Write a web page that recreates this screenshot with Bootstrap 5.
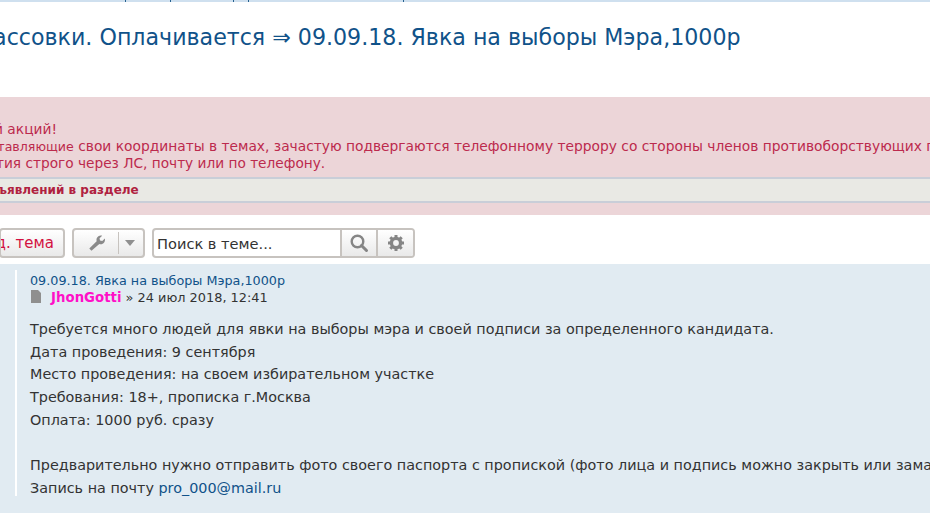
<!DOCTYPE html>
<html lang="ru"><head><meta charset="utf-8">
<link rel="stylesheet" href="https://cdn.jsdelivr.net/npm/bootstrap@5.3.0/dist/css/bootstrap.min.css">
<style>
html,body{height:516px;overflow:hidden;background:#fff}
body{font-family:"DejaVu Sans",Verdana,sans-serif;color:#333;width:930px}
.topline{height:2px;background-color:#cfe0ef;background-image:linear-gradient(#27618f,#27618f),linear-gradient(#27618f,#27618f),linear-gradient(#27618f,#27618f),linear-gradient(#27618f,#27618f),linear-gradient(#27618f,#27618f);background-size:1px 2px;background-repeat:no-repeat;background-position:125px 0,170px 0,233px 0,248px 0,403px 0}
.tt{font-size:22.15px;line-height:28px;color:#105289;margin:21px 0 0 -26px;white-space:nowrap;height:74px}
.warnbox{height:118px;background:#ecd5d8;color:#bc2a4d;font-size:13.8px;line-height:17px;padding-top:24px;white-space:nowrap}
.warnbox p{margin:0}
.warn0{margin-left:-6px!important}
.warn1{margin-left:-27px!important}
.warn1 span{font-size:12.6px}
.warn2{margin-left:-4px!important;font-size:13.7px}
.bar{margin-top:5px;height:26px;background:#e9e9e4;border-top:2px solid #c9ced8;border-bottom:2px solid #c9ced8;font-weight:700;line-height:22px;font-size:12px;color:#b0223f;text-indent:-2px}
.tools{height:49px;padding:13px 0 0 0;gap:7px;align-items:flex-start}
.tbtn{height:30px;border:2px solid #c7c3bf;border-radius:4px;background:linear-gradient(#fff,#e9e9e9);display:flex;align-items:center;box-sizing:border-box}
.newb{width:66px;margin-left:-1px;color:#d31141;font-size:15px;justify-content:flex-end;padding:1px 9px 0 0;white-space:nowrap;overflow:hidden}
.toolb{width:73px;padding:0 2px}
.toolb span{display:flex;align-items:center;justify-content:center;height:22px}
.tw{width:43px;border-right:1px solid #c7c3bf}
.tc{flex:1}
.caret{width:0;height:0;border:5px solid transparent;border-top:6px solid #8f8f8f;border-bottom:0;display:block}
.searchb{width:263px;background:#fff;overflow:hidden}
.sinp{width:188px;padding:1px 0 0 3px;font-size:14.6px;color:#333;white-space:nowrap;height:100%;line-height:26px;border-right:2px solid #c7c3bf}
.sbtn{height:100%;display:flex;align-items:center;justify-content:center;background:linear-gradient(#fff,#e9e9e9)}
.s1{width:36px;border-right:2px solid #c7c3bf}
.s2{flex:1}
.postwrap{height:249px;background:#e1ebf2;padding:6px 0 0 15px}
.postinner{border-left:2px solid #fff;padding-left:13px;height:226px;white-space:nowrap}
.ptitle{font-size:12.75px;line-height:17px;color:#105289;padding-top:2px}
.pauth{font-size:12.9px;line-height:17px;color:#333}
.pauth b{color:#ff10c8;margin:0 0 0 3px;font-size:13.3px}
.pauth svg{margin-right:2px;vertical-align:-1px}
.pbody{margin-top:12px;font-size:14.37px;line-height:22.7px;color:#333}
.pbody a{color:#105289;text-decoration:none}
</style></head><body>
<div class="topline"></div>
<div class="tt">Массовки. Оплачивается ⇒ 09.09.18. Явка на выборы Мэра,1000р</div>
<div class="warnbox">
<p class="warn0">й акций!</p>
<p class="warn1"><span>выставляющие</span> свои координаты в темах, зачастую подвергаются телефонному террору со стороны членов противоборствующих г</p>
<p class="warn2">тия строго через ЛС, почту или по телефону.</p>
<div class="bar">ъявлений в разделе</div>
</div>
<div class="d-flex tools">
<div class="tbtn newb">д. тема</div>
<div class="tbtn toolb"><span class="tw"><svg width="19" height="18" viewBox="0 0 22 20"><path fill="#8a8a8a" d="M4 19l-2.5-2.5L10 8c-.6-2.4.2-4.6 2-5.8 1.4-.9 3-1 4.4-.6l-3 3 .5 2.6 2.6.5 3-3c.4 1.6.2 3.2-.8 4.6-1.3 1.8-3.4 2.4-5.6 1.8z"/></svg></span><span class="tc"><i class="caret"></i></span></div>
<div class="tbtn searchb"><div class="sinp">Поиск в теме...</div><div class="sbtn s1"><svg width="20" height="20" viewBox="0 0 20 20"><circle cx="8.5" cy="8.5" r="5.8" fill="none" stroke="#858585" stroke-width="2.4"/><path d="M12.5 12.5l5 5" stroke="#858585" stroke-width="3" stroke-linecap="round"/></svg></div><div class="sbtn s2"><svg width="18" height="18" viewBox="0 0 18 18"><circle cx="9" cy="9" r="4.6" fill="none" stroke="#858585" stroke-width="3.4"/><path stroke="#858585" stroke-width="3" d="M9 1v3M9 14v3M1 9h3M14 9h3M3.3 3.3l2.1 2.1M12.6 12.6l2.1 2.1M3.3 14.7l2.1-2.1M12.6 5.4l2.1-2.1"/></svg></div></div>
</div>
<div class="postwrap"><div class="postinner">
<div class="ptitle">09.09.18. Явка на выборы Мэра,1000р</div>
<div class="pauth"><svg width="12" height="13" viewBox="0 0 12 13"><path fill="#8f8f8f" d="M1 0h7l3 3v10H1z"/></svg> <b>JhonGotti</b> » 24 июл 2018, 12:41</div>
<div class="pbody">Требуется много людей для явки на выборы мэра и своей подписи за определенного кандидата.<br>Дата проведения: 9 сентября<br>Место проведения: на своем избирательном участке<br>Требования: 18+, прописка г.Москва<br>Оплата: 1000 руб. сразу<br><br>Предварительно нужно отправить фото своего паспорта с пропиской (фото лица и подпись можно закрыть или замазать)<br>Запись на почту <a href="#">pro_000@mail.ru</a></div>
</div></div>
</body></html>
